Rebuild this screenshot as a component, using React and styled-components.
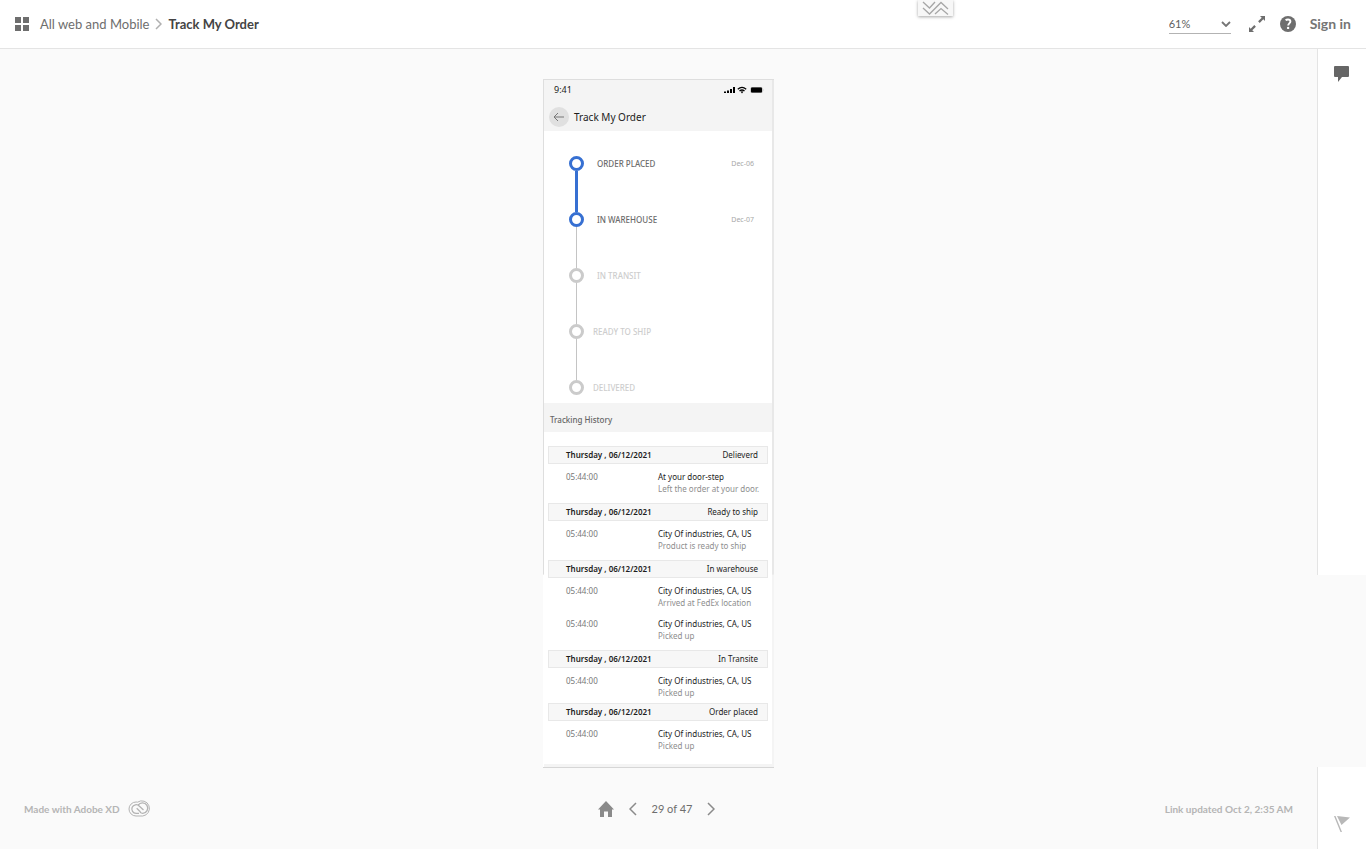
import React from "react";
import styled, { createGlobalStyle } from "styled-components";

const GlobalStyle = createGlobalStyle`
  *, *::before, *::after { box-sizing: border-box; }
  body {
    margin: 0;
    background: #fafafa;
    color: #6e6e6e;
    font-family: "Noto Sans", "Open Sans", sans-serif;
  }
  h1, h2, h3, p, ol, ul { margin: 0; padding: 0; font-weight: 400; list-style: none; }
  a { color: inherit; text-decoration: none; }
  svg { display: block; }
`;

const uiFont = `"Lato", sans-serif`;

const Page = styled.div`
  display: flex;
  flex-direction: column;
  min-height: 100vh;
`;

const TopBar = styled.header`
  position: relative;
  display: flex;
  align-items: center;
  justify-content: space-between;
  height: 49px;
  padding: 0 15px 0 14px;
  background: #fff;
  border-bottom: 1px solid #e4e4e4;
`;

const Breadcrumb = styled.nav`
  display: flex;
  align-items: center;
  gap: 6px;
  font: 13px/20px ${uiFont};
  color: #6e6e6e;
`;

const GridLink = styled.a`
  margin-right: 4px;
`;

const Current = styled.h1`
  font-size: 13px;
  font-weight: 700;
  color: #444;
`;

const Tools = styled.div`
  display: flex;
  align-items: center;
`;

const ZoomBox = styled.div`
  display: flex;
  align-items: center;
  width: 62px;
  height: 20px;
  margin-right: 18px;
  border-bottom: 1px solid #b3b3b3;
`;

const ZoomSelect = styled.select`
  appearance: none;
  flex: 1;
  min-width: 0;
  padding: 0;
  border: 0;
  background: none;
  color: #5e5e5e;
  font: 11px/18px ${uiFont};
`;

const IconButton = styled.button`
  display: flex;
  align-items: center;
  justify-content: center;
  flex: none;
  width: ${(p) => p.$size || 16}px;
  height: ${(p) => p.$size || 16}px;
  padding: 0;
  border: 0;
  background: none;
`;

const HelpButton = styled(IconButton)`
  margin-left: 15px;
`;

const RailButton = styled(IconButton)`
  margin: 17px 0;
`;

const SignIn = styled.a`
  margin-left: 14px;
  font: 700 14px/20px ${uiFont};
  color: #757575;
`;

const PullTab = styled.button`
  position: absolute;
  top: 0;
  left: 67.2%;
  display: flex;
  align-items: center;
  justify-content: center;
  width: 35px;
  height: 16px;
  padding: 0;
  border: 0;
  background: #f7f7f7;
  box-shadow: 0 1px 3px rgba(0, 0, 0, 0.35);
`;

const Body = styled.div`
  display: flex;
  flex: 1;
`;

const Stage = styled.main`
  display: flex;
  flex: 1;
  flex-direction: column;
  align-items: center;
  padding-top: 30px;
`;

const Rail = styled.aside`
  display: flex;
  flex-direction: column;
  width: 49px;
`;

const RailPanel = styled.div`
  display: flex;
  flex: ${(p) => p.$share} 0 0;
  align-items: ${(p) => (p.$end ? "flex-end" : "flex-start")};
  justify-content: center;
  background: #fff;
  border-left: 1px solid #e4e4e4;
`;

const RailGap = styled.div`
  flex: 192 0 0;
`;

const Phone = styled.article`
  width: 231px;
  padding: 0 2px 0 1px;
  border-top: 1px solid #dedede;
  border-bottom: 1px solid #d6d6d6;
  color: #1c1c1c;
  background:
    linear-gradient(#dedede, #dedede) left top / 1px 72% no-repeat,
    linear-gradient(#e8e8e8, #e8e8e8) right top / 2px 72% no-repeat,
    linear-gradient(#f4f4f4, #f4f4f4) right top / 2px 100% no-repeat,
    #fff;
`;

const PhoneTop = styled.header`
  background: #f4f4f4;
`;

const StatusBar = styled.div`
  display: flex;
  align-items: center;
  justify-content: space-between;
  height: 19px;
  padding: 0 7px 0 10px;
  font-size: 9px;
  line-height: 19px;
`;

const NavRow = styled.div`
  display: flex;
  align-items: center;
  gap: 5px;
  padding: 8px 5px 4px;
`;

const BackButton = styled(IconButton)`
  border-radius: 50%;
  background: #e0e0e0;
`;

const ScreenTitle = styled.h2`
  font-size: 10px;
  line-height: 20px;
`;

const Timeline = styled.ol`
  padding: 25px 18px 8px 25px;
`;

const Step = styled.li`
  display: flex;
  height: ${(p) => (p.$last ? 15 : 56)}px;
  font-size: 8px;
  font-weight: 500;
  line-height: 16px;
  color: ${(p) => (p.$done ? "#6b6b6b" : "#cdcdcd")};
`;

const Track = styled.div`
  display: flex;
  flex-direction: column;
  align-items: center;
  width: 15px;
`;

const Node = styled.span`
  flex: none;
  width: 15px;
  height: 15px;
  border: 3px solid ${(p) => (p.$done ? "#3770d2" : "#cbcbcb")};
  border-radius: 50%;
`;

const Connector = styled.span`
  flex: 1;
  width: ${(p) => (p.$done ? 3 : 1)}px;
  background: ${(p) => (p.$done ? "#3770d2" : "#c4c4c4")};
`;

const StepName = styled.span`
  flex: 1;
  margin-left: ${(p) => (p.$near ? 9 : 13)}px;
`;

const StepDate = styled.time`
  font-size: 7px;
  font-weight: 400;
  color: #a8a8a8;
`;

const HistoryTitle = styled.h3`
  height: 29px;
  padding: 5px 6px 0;
  background: #f4f4f4;
  color: #666;
  font-size: 8px;
  font-weight: 500;
  line-height: 24px;
`;

const History = styled.div`
  padding: 14px 4px 0;
`;

const Group = styled.section`
  padding-bottom: ${(p) => (p.$tight ? 4 : 8)}px;
`;

const GroupBar = styled.div`
  display: flex;
  align-items: center;
  justify-content: space-between;
  height: 18px;
  margin-bottom: 7px;
  padding: 0 9px 0 17px;
  border: 1px solid #e8e8e8;
  background: #f7f7f7;
  font-size: 8px;
  line-height: 16px;
`;

const GroupDate = styled.time`
  font-weight: 600;
`;

const Entry = styled.div`
  display: flex;
  font-size: 8px;
  line-height: 12px;

  & + & { margin-top: 9px; }
`;

const EntryTime = styled.time`
  width: 92px;
  margin-left: 18px;
  color: #777;
`;

const Place = styled.p`
  white-space: nowrap;
`;

const Note = styled.p`
  color: #8e8e8e;
  white-space: nowrap;
`;

const PhoneEnd = styled.div`
  height: 3px;
  margin-top: 4px;
  background: #f4f4f4;
`;

const Footer = styled.footer`
  display: grid;
  grid-template-columns: 1fr auto 1fr;
  flex: 1;
  align-items: center;
  align-self: stretch;
  min-height: 80px;
  padding: 0 24px;
  font: 10px/16px ${uiFont};
  color: #b5b5b5;
`;

const MadeWith = styled.a`
  display: flex;
  align-items: center;
  gap: 8px;
  font-weight: 700;
`;

const Pager = styled.div`
  display: flex;
  align-items: center;
  gap: 11px;
`;

const PageCount = styled.span`
  color: #6e6e6e;
  font-size: 11px;
`;

const Updated = styled.p`
  justify-self: end;
  font-weight: 700;
`;

const Chevron = ({ d, width, height, stroke = "#757575", weight = 1.5 }) => (
  <svg width={width} height={height} viewBox={`0 0 ${width} ${height}`} fill="none" stroke={stroke} strokeWidth={weight} aria-hidden="true">
    <path d={d} />
  </svg>
);

const steps = [
  { name: "ORDER PLACED", date: "Dec-06", done: true, link: true },
  { name: "IN WAREHOUSE", date: "Dec-07", done: true },
  { name: "IN TRANSIT" },
  { name: "READY TO SHIP", near: true },
  { name: "DELIVERED", near: true },
];

const city = "City Of industries, CA, US";
const history = [
  { status: "Delieverd", entries: [["At your door-step", "Left the order at your door."]] },
  { status: "Ready to ship", entries: [[city, "Product is ready to ship"]] },
  { status: "In warehouse", entries: [[city, "Arrived at FedEx location"], [city, "Picked up"]] },
  { status: "In Transite", tight: true, entries: [[city, "Picked up"]] },
  { status: "Order placed", entries: [[city, "Picked up"]] },
];

function Header() {
  return (
    <TopBar>
      <Breadcrumb aria-label="Breadcrumb">
        <GridLink href="#" aria-label="All screens">
          <svg width="16" height="16" viewBox="0 0 16 16" fill="#6e6e6e">
            <path d="M1 1h6v6H1zM9 1h6v6H9zM1 9h6v6H1zM9 9h6v6H9z" />
          </svg>
        </GridLink>
        <a href="#">All web and Mobile</a>
        <Chevron d="M1 1l5 5-5 5" width={7} height={12} stroke="#b0b0b0" />
        <Current>Track My Order</Current>
      </Breadcrumb>
      <PullTab type="button" aria-label="Toggle toolbar">
        <svg width="27" height="14" viewBox="0 0 27 14" fill="none" stroke="#a6a6a6" strokeWidth="1.3">
          <path d="M1 1l6.500 6L13 1M1 7l6.500 6L19 1.500 26 8M13 13l6-5.500 7 6" />
        </svg>
      </PullTab>
      <Tools>
        <ZoomBox>
          <ZoomSelect aria-label="Zoom" defaultValue="61%">
            <option>61%</option>
            <option>100%</option>
          </ZoomSelect>
          <Chevron d="M1 1l4 4 4-4" width={10} height={6} weight={1.8} />
        </ZoomBox>
        <IconButton type="button" aria-label="Full screen">
          <svg width="16" height="16" viewBox="0 0 16 16" fill="#6e6e6e">
            <path d="M11 0h5v5l-1.700-1.700-3.600 3.600-1.600-1.600 3.600-3.600zM0 11l1.700 1.700 3.600-3.600 1.600 1.600-3.600 3.600L5 16H0z" />
          </svg>
        </IconButton>
        <HelpButton type="button" aria-label="Help">
          <svg width="16" height="16" viewBox="0 0 16 16">
            <circle cx="8" cy="8" r="8" fill="#6e6e6e" />
            <path d="M5.600 4.200C6.200 3.700 7.100 3.500 8 3.500c1.600 0 2.400.9 2.400 2 0 1.800-2.200 2-2.200 4" fill="none" stroke="#fff" strokeWidth="1.900" />
            <circle cx="8.100" cy="11.900" r="1.200" fill="#fff" />
          </svg>
        </HelpButton>
        <SignIn href="#">Sign in</SignIn>
      </Tools>
    </TopBar>
  );
}

function TrackScreen() {
  return (
    <Phone>
      <PhoneTop>
        <StatusBar>
          <span>9:41</span>
          <svg width="42" height="8" viewBox="0 0 42 8" fill="#000" aria-hidden="true">
            <path d="M1 5.500h2V7H1zM4 4.500h2V7H4zM7 3h2v4H7zM10 1h2v6h-2z" />
            <g fill="none" stroke="#000" strokeWidth="1.300">
              <path d="M14.800 3.200q4.200-3.600 8.400 0M16.500 5q2.500-2 5 0" />
            </g>
            <path d="M17.700 5.800q1.300-.9 2.600 0L19 7.400z" />
            <rect x="27.500" y="1" width="12" height="6" rx="1.500" fill="#aaa" />
            <rect x="28" y="1.500" width="11" height="5" rx="1" />
            <path d="M40.300 3v2q1-1 0-2z" fill="#aaa" />
          </svg>
        </StatusBar>
        <NavRow>
          <BackButton type="button" $size={20} aria-label="Back">
            <svg width="12" height="10" viewBox="0 0 12 10" fill="none" stroke="#777">
              <path d="M5 1L1 5l4 4M1 5h10" />
            </svg>
          </BackButton>
          <ScreenTitle>Track My Order</ScreenTitle>
        </NavRow>
      </PhoneTop>
      <Timeline>
        {steps.map((s, i) => {
          const last = i === steps.length - 1;
          return (
            <Step key={s.name} $done={s.done} $last={last}>
              <Track>
                <Node $done={s.done} />
                {!last && <Connector $done={s.link} />}
              </Track>
              <StepName $near={s.near}>{s.name}</StepName>
              {s.date && <StepDate>{s.date}</StepDate>}
            </Step>
          );
        })}
      </Timeline>
      <HistoryTitle>Tracking History</HistoryTitle>
      <History>
        {history.map((g) => (
          <Group key={g.status} $tight={g.tight}>
            <GroupBar>
              <GroupDate>Thursday , 06/12/2021</GroupDate>
              <span>{g.status}</span>
            </GroupBar>
            {g.entries.map(([place, note]) => (
              <Entry key={note}>
                <EntryTime>05:44:00</EntryTime>
                <div>
                  <Place>{place}</Place>
                  <Note>{note}</Note>
                </div>
              </Entry>
            ))}
          </Group>
        ))}
      </History>
      <PhoneEnd />
    </Phone>
  );
}

export default function App() {
  return (
    <Page>
      <GlobalStyle />
      <Header />
      <Body>
        <Stage>
          <TrackScreen />
          <Footer>
            <MadeWith href="#">
              Made with Adobe XD
              <svg width="23" height="17" viewBox="0 0 23 17" fill="none" stroke="#b3b3b3">
                <path d="M8 16A7 7 0 0 1 8 2Q9 2 9.500 2.200A7.600 7.600 0 1 1 14.700 16z" />
                <path d="M12.500 12L8.700 8.300M11 13.300H8A4.300 4.300 0 1 1 11.200 6l4.300 4M10 5.500A5.200 5.200 0 1 1 14.700 13.300Q13.200 13.300 12 12.300" strokeWidth="1.300" />
              </svg>
            </MadeWith>
            <Pager>
              <IconButton type="button" aria-label="Home">
                <svg width="16" height="16" viewBox="0 0 16 16" fill="#8a8a8a">
                  <path d="M8 0l8 8.500h-2V16H10v-5.500H6V16H2V8.500H0z" />
                </svg>
              </IconButton>
              <IconButton type="button" aria-label="Previous">
                <Chevron d="M7 1L1 7l6 6" width={8} height={14} stroke="#8a8a8a" />
              </IconButton>
              <PageCount>29 of 47</PageCount>
              <IconButton type="button" aria-label="Next">
                <Chevron d="M1 1l6 6-6 6" width={8} height={14} stroke="#8a8a8a" />
              </IconButton>
            </Pager>
            <Updated>Link updated Oct 2, 2:35 AM</Updated>
          </Footer>
        </Stage>
        <Rail>
          <RailPanel $share={526}>
            <RailButton type="button" aria-label="Comments">
              <svg width="16" height="16" viewBox="0 0 16 16" fill="#666">
                <path d="M1 0h13a1 1 0 0 1 1 1v9a1 1 0 0 1-1 1H8l-4 5v-5H1a1 1 0 0 1-1-1V1a1 1 0 0 1 1-1z" />
              </svg>
            </RailButton>
          </RailPanel>
          <RailGap />
          <RailPanel $share={82} $end>
            <RailButton type="button" aria-label="Report">
              <svg width="16" height="16" viewBox="0 0 16 16" fill="#b8b8b8">
                <path d="M0 0h1.500l6.500 16H6.500zM3 0l13 1.500L7.500 9z" />
              </svg>
            </RailButton>
          </RailPanel>
        </Rail>
      </Body>
    </Page>
  );
}
